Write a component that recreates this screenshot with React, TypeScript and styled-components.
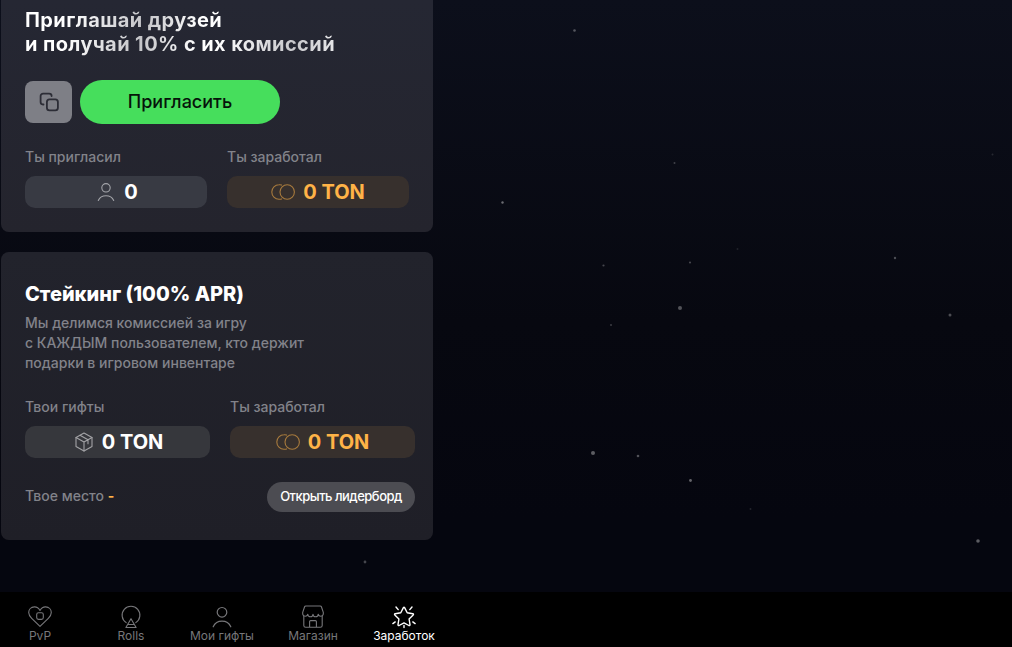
import React from "react";
import styled, { createGlobalStyle } from "styled-components";

const GlobalStyle = createGlobalStyle`
  *, *::before, *::after { box-sizing: border-box; }
  body {
    margin: 0;
    background: #05060f;
    color: #fff;
    font-family: Inter, "Liberation Sans", sans-serif;
  }
  h2, p, dl, dd { margin: 0; }
  button { font: inherit; border: 0; padding: 0; cursor: pointer; }
`;

const Page = styled.div`
  position: relative;
  display: flex;
  flex-direction: column;
  min-height: 100vh;
  background: linear-gradient(180deg, #0c0f1b 0%, #070810 50%, #05060f 80%);
`;

const Sky = styled.svg`
  position: absolute;
  inset: 0;
  width: 100%;
  height: 100%;
  pointer-events: none;
`;

const Content = styled.main`
  position: relative;
  display: flex;
  flex-direction: column;
  gap: 20px;
  width: 100%;
  max-width: 433px;
  padding: 0 0 24px 1px;
`;

const ReferralCard = styled.section`
  display: flex;
  flex-direction: column;
  gap: 24px;
  padding: 8px 24px 24px;
  border-radius: 0 0 8px 8px;
  background: linear-gradient(180deg, #252733, #24242d);
`;

const StakingCard = styled.section`
  padding: 29px 18px 28px 24px;
  border-radius: 8px;
  background: linear-gradient(180deg, #22232c, #1f1f27);
`;

const ShimmerTitle = styled.h2`
  align-self: flex-start;
  font-size: 20px;
  font-weight: 700;
  line-height: 24px;
  letter-spacing: 0.02em;
  color: transparent;
  background: linear-gradient(100deg, #fff 0%, #fff 14%, #c4c4c8 38%, #fff 56%, #fff 62%, #c8c8cc 86%, #e8e8ea 100%);
  background-clip: text;
  -webkit-background-clip: text;
`;

const Title = styled.h2`
  font-size: 20px;
  font-weight: 800;
  line-height: 26px;
`;

const Description = styled.p`
  margin: 6px 0 25px;
  font-size: 14px;
  font-weight: 500;
  line-height: 20px;
  color: #82838a;
`;

const Actions = styled.div`
  display: flex;
  align-items: center;
  gap: 8px;
`;

const CopyButton = styled.button`
  display: grid;
  place-items: center;
  width: 47px;
  height: 42px;
  border-radius: 8px;
  color: #2c2d36;
  background: #7e7f86;
`;

const InviteButton = styled.button`
  width: 200px;
  height: 44px;
  padding-bottom: 1px;
  border-radius: 22px;
  font-size: 18px;
  font-weight: 500;
  color: #06140a;
  background: #46de5c;
`;

const Stats = styled.dl`
  display: grid;
  grid-template-columns: 1fr 1fr;
  gap: 20px;
`;

const StatLabel = styled.dt`
  margin-bottom: 10px;
  font-size: 14px;
  font-weight: 500;
  line-height: 18px;
  color: #82838a;
`;

const StatValue = styled.dd<{ $tone: "cool" | "plain" | "gold" }>`
  display: flex;
  align-items: center;
  justify-content: center;
  gap: 8px;
  height: 32px;
  border-radius: 10px;
  font-size: 20px;
  font-weight: 700;
  color: ${({ $tone }) => ($tone === "gold" ? "#ffb347" : "#fff")};
  background: ${({ $tone }) =>
    $tone === "gold" ? "#37302d" : $tone === "cool" ? "#383a43" : "#36373c"};
`;

const PlaceRow = styled.div`
  display: flex;
  align-items: center;
  justify-content: space-between;
  margin-top: 24px;
`;

const Place = styled.p`
  padding-bottom: 2px;
  font-size: 14px;
  font-weight: 500;
  line-height: 18px;
  color: #82838a;
`;

const PlaceValue = styled.span`
  font-weight: 700;
  color: #ffb347;
`;

const LeaderboardButton = styled.button`
  width: 148px;
  height: 30px;
  padding-bottom: 2px;
  border-radius: 15px;
  font-size: 13px;
  font-weight: 500;
  letter-spacing: -0.5px;
  color: #fff;
  background: #4c4c52;
`;

const TabBar = styled.nav`
  position: sticky;
  bottom: 0;
  margin-top: auto;
  background: #000;
`;

const TabList = styled.div`
  display: flex;
  justify-content: space-between;
  max-width: 444px;
  height: 55px;
  padding: 13px 8px 0;
`;

const Tab = styled.a<{ $active?: boolean }>`
  display: flex;
  flex-direction: column;
  align-items: center;
  width: 64px;
  font-size: 12px;
  line-height: 14px;
  white-space: nowrap;
  text-decoration: none;
  color: ${({ $active }) => ($active ? "#fff" : "#77777a")};
`;

const Icon = styled.svg`
  display: block;
  flex: none;
  fill: none;
  stroke: currentColor;
  stroke-linecap: round;
  stroke-linejoin: round;
`;

const CopyIcon = () => (
  <Icon width="20" height="20" viewBox="0 0 20 20" strokeWidth="1.8" aria-hidden="true">
    <path d="M4.500 12.500H4a2.400 2.400 0 0 1-2.400-2.400V4a2.400 2.400 0 0 1 2.400-2.400h6.200a2.400 2.400 0 0 1 2.400 2.400" />
    <rect x="7.900" y="7.400" width="11" height="11" rx="2.600" />
  </Icon>
);

const PersonIcon = () => (
  <Icon width="22" height="20" viewBox="0 0 22 20" strokeWidth="1.1" color="#a3a4a9" aria-hidden="true">
    <circle cx="12" cy="5.800" r="4.200" />
    <path d="M4.300 18.400C5.900 14.900 8.800 13.700 12 13.700s6.100 1.200 7.700 4.700" />
  </Icon>
);

const CoinsIcon = () => (
  <Icon width="24" height="16" viewBox="0 0 24 16" strokeWidth="1.1" color="#a77a3d" aria-hidden="true">
    <circle cx="16.200" cy="8" r="7.200" />
    <path d="M10.600 1.100C9.800.8 8.900.7 8 .8a7.200 7.200 0 0 0 0 14.400c.9.100 1.800 0 2.600-.3" />
  </Icon>
);

const BoxIcon = () => (
  <Icon width="22" height="20" viewBox="-3 0 22 20" strokeWidth="1.1" color="#a3a3a6" aria-hidden="true">
    <path d="M9 1l8 4.500v9L9 19l-8-4.500v-9z" />
    <path d="M1 5.500L9 10l8-4.500M9 10v9M5 3.300l8 4.500v4" />
  </Icon>
);

const HeartIcon = () => (
  <Icon width="24" height="24" viewBox="0 0 24 24" strokeWidth="1.100" aria-hidden="true">
    <path d="M12 5.400C10.500 2.800 8.400 1.800 6.300 1.900 3.100 2 .7 4.400.7 7.600c0 2.400 1.200 4 3 5.800l8.300 8 8.300-8c1.800-1.800 3-3.400 3-5.800 0-3.200-2.400-5.600-5.600-5.700-2.100-.1-4.200.9-5.700 3.500z" />
    <rect x="8.700" y="7.800" width="6.600" height="6.600" rx="1.800" />
  </Icon>
);

const RollsIcon = () => (
  <Icon width="24" height="24" viewBox="0 0 24 24" strokeWidth="1.100" aria-hidden="true">
    <path d="M7.200 17.600A8.900 8.900 0 1 1 16.800 17.600" />
    <path d="M12 13.700L6.900 22.500h10.200zM9 19.500h6" />
  </Icon>
);

const PersonTabIcon = () => (
  <Icon width="24" height="24" viewBox="0 0 24 24" strokeWidth="1.200" aria-hidden="true">
    <circle cx="12" cy="7.300" r="4.800" />
    <path d="M3.200 21.800C5 17.800 8.400 16.200 12 16.200s7 1.600 8.800 5.600" />
  </Icon>
);

const ShopIcon = () => (
  <Icon width="24" height="24" viewBox="0 0 24 24" strokeWidth="1.100" aria-hidden="true">
    <path d="M4.800 1h14.400c.6 0 1 .3 1.200.8l1.900 5.600v1.800a2.600 2.600 0 0 1-5.100 0 2.600 2.600 0 0 1-5.200 0 2.600 2.600 0 0 1-5.200 0 2.600 2.600 0 0 1-5.100 0V7.400l1.900-5.600c.2-.5.600-.8 1.200-.8z" />
    <path d="M2.800 11.400v9c0 1.200.7 1.900 1.900 1.900h14.600c1.200 0 1.900-.7 1.900-1.900v-9M8.600 22.300v-5.700c0-.6.400-1 1-1h4.800c.6 0 1 .4 1 1v5.700" />
  </Icon>
);

const StarIcon = () => (
  <Icon width="24" height="24" viewBox="0 0 24 24" strokeWidth="1.400" aria-hidden="true">
    <path d="M11.400 2.600q.6-1 1.200 0l2.600 5.200 5.600.9q1.100.3.400 1.200l-4.100 4.100.9 5.700q0 1.200-1.100.8L12 17.900l-4.900 2.600q-1.100.4-1.100-.8l.9-5.700-4.100-4.100q-.7-.9.400-1.200l5.600-.9z" />
    <path d="M4 2l2.200 2.600M20 2l-2.200 2.600M.9 18.600l2.300-1.700M23.100 18.600l-2.300-1.700M12 20.500v2" />
  </Icon>
);

// [x, y, radius, opacity]
const STARS: [number, number, number, number][] = [
  [574.5, 30.5, 1.3, 0.3],
  [674.5, 163, 1, 0.22],
  [992.5, 154.5, 1, 0.12],
  [502.5, 202.5, 1.2, 0.4],
  [737.5, 249, 1, 0.1],
  [603.5, 265.5, 1.1, 0.25],
  [690, 262.5, 1.1, 0.25],
  [895, 258, 1.2, 0.28],
  [680, 308, 2, 0.3],
  [950, 315, 1.5, 0.28],
  [611, 325, 1.1, 0.2],
  [593, 453, 2, 0.35],
  [638, 456, 1.3, 0.3],
  [690.5, 480.5, 1.4, 0.38],
  [750.5, 509, 1, 0.12],
  [978, 541, 1.8, 0.35],
  [365, 562, 1.4, 0.26],
];

const App = () => (
  <>
    <GlobalStyle />
    <Page>
      <Sky aria-hidden="true">
        {STARS.map(([x, y, r, o]) => (
          <circle key={`${x}-${y}`} cx={x} cy={y} r={r} fill="#fff" opacity={o} />
        ))}
      </Sky>
      <Content>
        <ReferralCard>
          <ShimmerTitle>
            Приглашай друзей
            <br />и получай 10% с их комиссий
          </ShimmerTitle>
          <Actions>
            <CopyButton type="button" aria-label="Скопировать ссылку">
              <CopyIcon />
            </CopyButton>
            <InviteButton type="button">Пригласить</InviteButton>
          </Actions>
          <Stats>
            <div>
              <StatLabel>Ты пригласил</StatLabel>
              <StatValue $tone="cool">
                <PersonIcon />0
              </StatValue>
            </div>
            <div>
              <StatLabel>Ты заработал</StatLabel>
              <StatValue $tone="gold">
                <CoinsIcon />0 TON
              </StatValue>
            </div>
          </Stats>
        </ReferralCard>
        <StakingCard>
          <Title>Стейкинг (100% APR)</Title>
          <Description>
            Мы делимся комиссией за игру
            <br />с КАЖДЫМ пользователем, кто держит
            <br />
            подарки в игровом инвентаре
          </Description>
          <Stats>
            <div>
              <StatLabel>Твои гифты</StatLabel>
              <StatValue $tone="plain">
                <BoxIcon />0 TON
              </StatValue>
            </div>
            <div>
              <StatLabel>Ты заработал</StatLabel>
              <StatValue $tone="gold">
                <CoinsIcon />0 TON
              </StatValue>
            </div>
          </Stats>
          <PlaceRow>
            <Place>
              Твое место <PlaceValue>-</PlaceValue>
            </Place>
            <LeaderboardButton type="button">Открыть лидерборд</LeaderboardButton>
          </PlaceRow>
        </StakingCard>
      </Content>
      <TabBar>
        <TabList>
          <Tab href="#pvp">
            <HeartIcon />
            PvP
          </Tab>
          <Tab href="#rolls">
            <RollsIcon />
            Rolls
          </Tab>
          <Tab href="#gifts">
            <PersonTabIcon />
            Мои гифты
          </Tab>
          <Tab href="#shop">
            <ShopIcon />
            Магазин
          </Tab>
          <Tab href="#earn" $active aria-current="page">
            <StarIcon />
            Заработок
          </Tab>
        </TabList>
      </TabBar>
    </Page>
  </>
);

export default App;
